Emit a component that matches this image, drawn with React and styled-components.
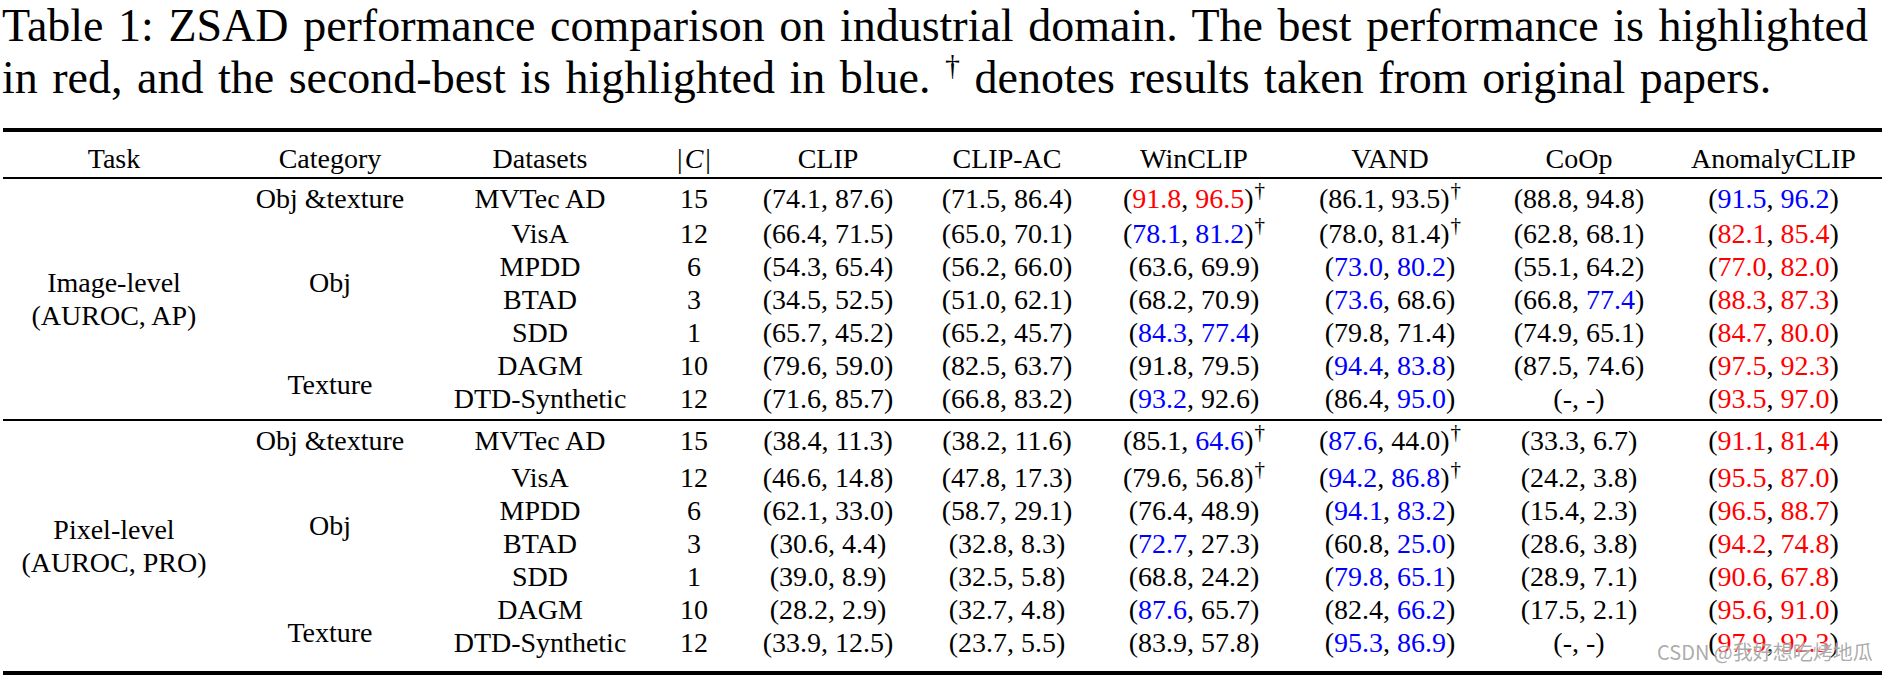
import React from "react";
import styled, { createGlobalStyle } from "styled-components";

const Global = createGlobalStyle`
  html, body { margin: 0; padding: 0; background: #fff; }
  body { font-family: "Liberation Serif", "Times New Roman", serif; color: #000; }
`;

const Page = styled.div`
  position: relative;
  width: 1882px;
  height: 677px;
  overflow: hidden;
  background: #fff;
`;

const Caption = styled.div`
  width: 1866px;
  margin: 0 0 24px 2px;
  font-size: 46px;
  line-height: 52px;
`;

const JustLine = styled.div`
  text-align: justify;
  text-align-last: justify;
  white-space: nowrap;
`;

const PlainLine = styled.div`
  text-align: left;
  white-space: nowrap;
  word-spacing: 3px;
`;

const CapSup = styled.span`
  font-size: 30px;
  vertical-align: 18px;
  line-height: 0;
`;

const Table = styled.table`
  margin-left: 3px;
  width: 1879px;
  table-layout: fixed;
  border-collapse: separate;
  border-spacing: 0;
  font-size: 28px;
  line-height: 33px;
`;

const Col = styled.col`
  width: ${(p) => p.$w}px;
`;

const Th = styled.th`
  font-weight: 400;
  text-align: center;
  white-space: nowrap;
  padding: 10px 0 2px;
  border-top: 4px solid #000;
  border-bottom: 2px solid #000;
`;

const Td = styled.td`
  text-align: center;
  vertical-align: ${(p) => (p.$span ? "middle" : "baseline")};
  white-space: nowrap;
  padding: ${(p) => p.$pt || 0}px 0 ${(p) => p.$pb || 0}px;
  border-bottom: ${(p) => (p.$rule ? `${p.$rule}px solid #000` : "none")};
`;

const Num = styled.span`
  color: ${(p) => (p.$c === "R" ? "#ff0000" : p.$c === "B" ? "#0000ff" : "#000")};
`;

const Dagger = styled.span`
  font-size: 21px;
  vertical-align: 11px;
  line-height: 0;
  margin-left: 1px;
`;

const Script = styled.span`
  font-style: italic;
  margin: 0 2px;
`;

const Watermark = styled.div`
  position: absolute;
  left: 1657px;
  top: 642px;
  font-family: "Noto Sans CJK SC", "Noto Sans", sans-serif;
  font-size: 20px;
  line-height: 20px;
  color: rgba(150, 150, 150, 0.8);
  text-shadow: 0 0 2px #fff;
  white-space: nowrap;
`;

const widths = [222, 210, 210, 98, 170, 188, 186, 206, 172, 217];
const headers = ["Task", "Category", "Datasets", null, "CLIP", "CLIP-AC", "WinCLIP", "VAND", "CoOp", "AnomalyCLIP"];

const blocks = [
  {
    task: ["Image-level", "(AUROC, AP)"],
    pads: [[3, 0], [2, 0], [0, 0], [0, 0], [0, 0], [0, 0], [0, 4]],
    rows: [
      ["MVTec AD", "15", "74.1 87.6", "71.5 86.4", "R91.8 R96.5 +", "86.1 93.5 +", "88.8 94.8", "B91.5 B96.2"],
      ["VisA", "12", "66.4 71.5", "65.0 70.1", "B78.1 B81.2 +", "78.0 81.4 +", "62.8 68.1", "R82.1 R85.4"],
      ["MPDD", "6", "54.3 65.4", "56.2 66.0", "63.6 69.9", "B73.0 B80.2", "55.1 64.2", "R77.0 R82.0"],
      ["BTAD", "3", "34.5 52.5", "51.0 62.1", "68.2 70.9", "B73.6 68.6", "66.8 B77.4", "R88.3 R87.3"],
      ["SDD", "1", "65.7 45.2", "65.2 45.7", "B84.3 B77.4", "79.8 71.4", "74.9 65.1", "R84.7 R80.0"],
      ["DAGM", "10", "79.6 59.0", "82.5 63.7", "91.8 79.5", "B94.4 B83.8", "87.5 74.6", "R97.5 R92.3"],
      ["DTD-Synthetic", "12", "71.6 85.7", "66.8 83.2", "B93.2 92.6", "86.4 B95.0", "- -", "R93.5 R97.0"],
    ],
    rule: 2,
  },
  {
    task: ["Pixel-level", "(AUROC, PRO)"],
    pads: [[3, 0], [4, 0], [0, 0], [0, 0], [0, 0], [0, 0], [0, 12]],
    rows: [
      ["MVTec AD", "15", "38.4 11.3", "38.2 11.6", "85.1 B64.6 +", "B87.6 44.0 +", "33.3 6.7", "R91.1 R81.4"],
      ["VisA", "12", "46.6 14.8", "47.8 17.3", "79.6 56.8 +", "B94.2 B86.8 +", "24.2 3.8", "R95.5 R87.0"],
      ["MPDD", "6", "62.1 33.0", "58.7 29.1", "76.4 48.9", "B94.1 B83.2", "15.4 2.3", "R96.5 R88.7"],
      ["BTAD", "3", "30.6 4.4", "32.8 8.3", "B72.7 27.3", "60.8 B25.0", "28.6 3.8", "R94.2 R74.8"],
      ["SDD", "1", "39.0 8.9", "32.5 5.8", "68.8 24.2", "B79.8 B65.1", "28.9 7.1", "R90.6 R67.8"],
      ["DAGM", "10", "28.2 2.9", "32.7 4.8", "B87.6 65.7", "82.4 B66.2", "17.5 2.1", "R95.6 R91.0"],
      ["DTD-Synthetic", "12", "33.9 12.5", "23.7 5.5", "83.9 57.8", "B95.3 B86.9", "- -", "R97.9 R92.3"],
    ],
    rule: 4,
  },
];

function Pair({ spec }) {
  const toks = spec.split(" ");
  const dagger = toks[2] === "+";
  const part = (t) => {
    const c = t[0] === "R" || t[0] === "B" ? t[0] : null;
    return <Num $c={c}>{c ? t.slice(1) : t}</Num>;
  };
  return (
    <>
      ({part(toks[0])}, {part(toks[1])}){dagger && <Dagger>†</Dagger>}
    </>
  );
}

function categoryFor(i) {
  if (i === 0) return { label: "Obj &texture", span: 1 };
  if (i === 1) return { label: "Obj", span: 4 };
  if (i === 5) return { label: "Texture", span: 2 };
  return null;
}

function Block({ block }) {
  const last = block.rows.length - 1;
  return (
    <tbody>
      {block.rows.map((r, i) => {
        const [pt, pb] = block.pads[i];
        const rule = i === last ? block.rule : 0;
        const cat = categoryFor(i);
        const catEndsLast = cat && i + cat.span - 1 === last;
        return (
          <tr key={i}>
            {i === 0 && (
              <Td $span rowSpan={block.rows.length} $rule={block.rule}>
                {block.task[0]}
                <br />
                {block.task[1]}
              </Td>
            )}
            {cat &&
              (cat.span === 1 ? (
                <Td $pt={pt} $pb={pb} $rule={rule}>{cat.label}</Td>
              ) : (
                <Td $span rowSpan={cat.span} $rule={catEndsLast ? block.rule : 0}>
                  {cat.label}
                </Td>
              ))}
            <Td $pt={pt} $pb={pb} $rule={rule}>{r[0]}</Td>
            <Td $pt={pt} $pb={pb} $rule={rule}>{r[1]}</Td>
            {r.slice(2).map((s, j) => (
              <Td key={j} $pt={pt} $pb={pb} $rule={rule}>
                <Pair spec={s} />
              </Td>
            ))}
          </tr>
        );
      })}
    </tbody>
  );
}

export default function App() {
  return (
    <Page>
      <Global />
      <Caption>
        <JustLine>
          Table 1: ZSAD performance comparison on industrial domain. The best performance is highlighted
        </JustLine>
        <PlainLine>
          in red, and the second-best is highlighted in blue. <CapSup>†</CapSup> denotes results taken from original papers.
        </PlainLine>
      </Caption>
      <Table>
        <colgroup>
          {widths.map((w, i) => (
            <Col key={i} $w={w} />
          ))}
        </colgroup>
        <thead>
          <tr>
            {headers.map((h, i) => (
              <Th key={i}>
                {h === null ? (
                  <>
                    |<Script>C</Script>|
                  </>
                ) : (
                  h
                )}
              </Th>
            ))}
          </tr>
        </thead>
        {blocks.map((b, i) => (
          <Block key={i} block={b} />
        ))}
      </Table>
      <Watermark>CSDN @我好想吃烤地瓜</Watermark>
    </Page>
  );
}
